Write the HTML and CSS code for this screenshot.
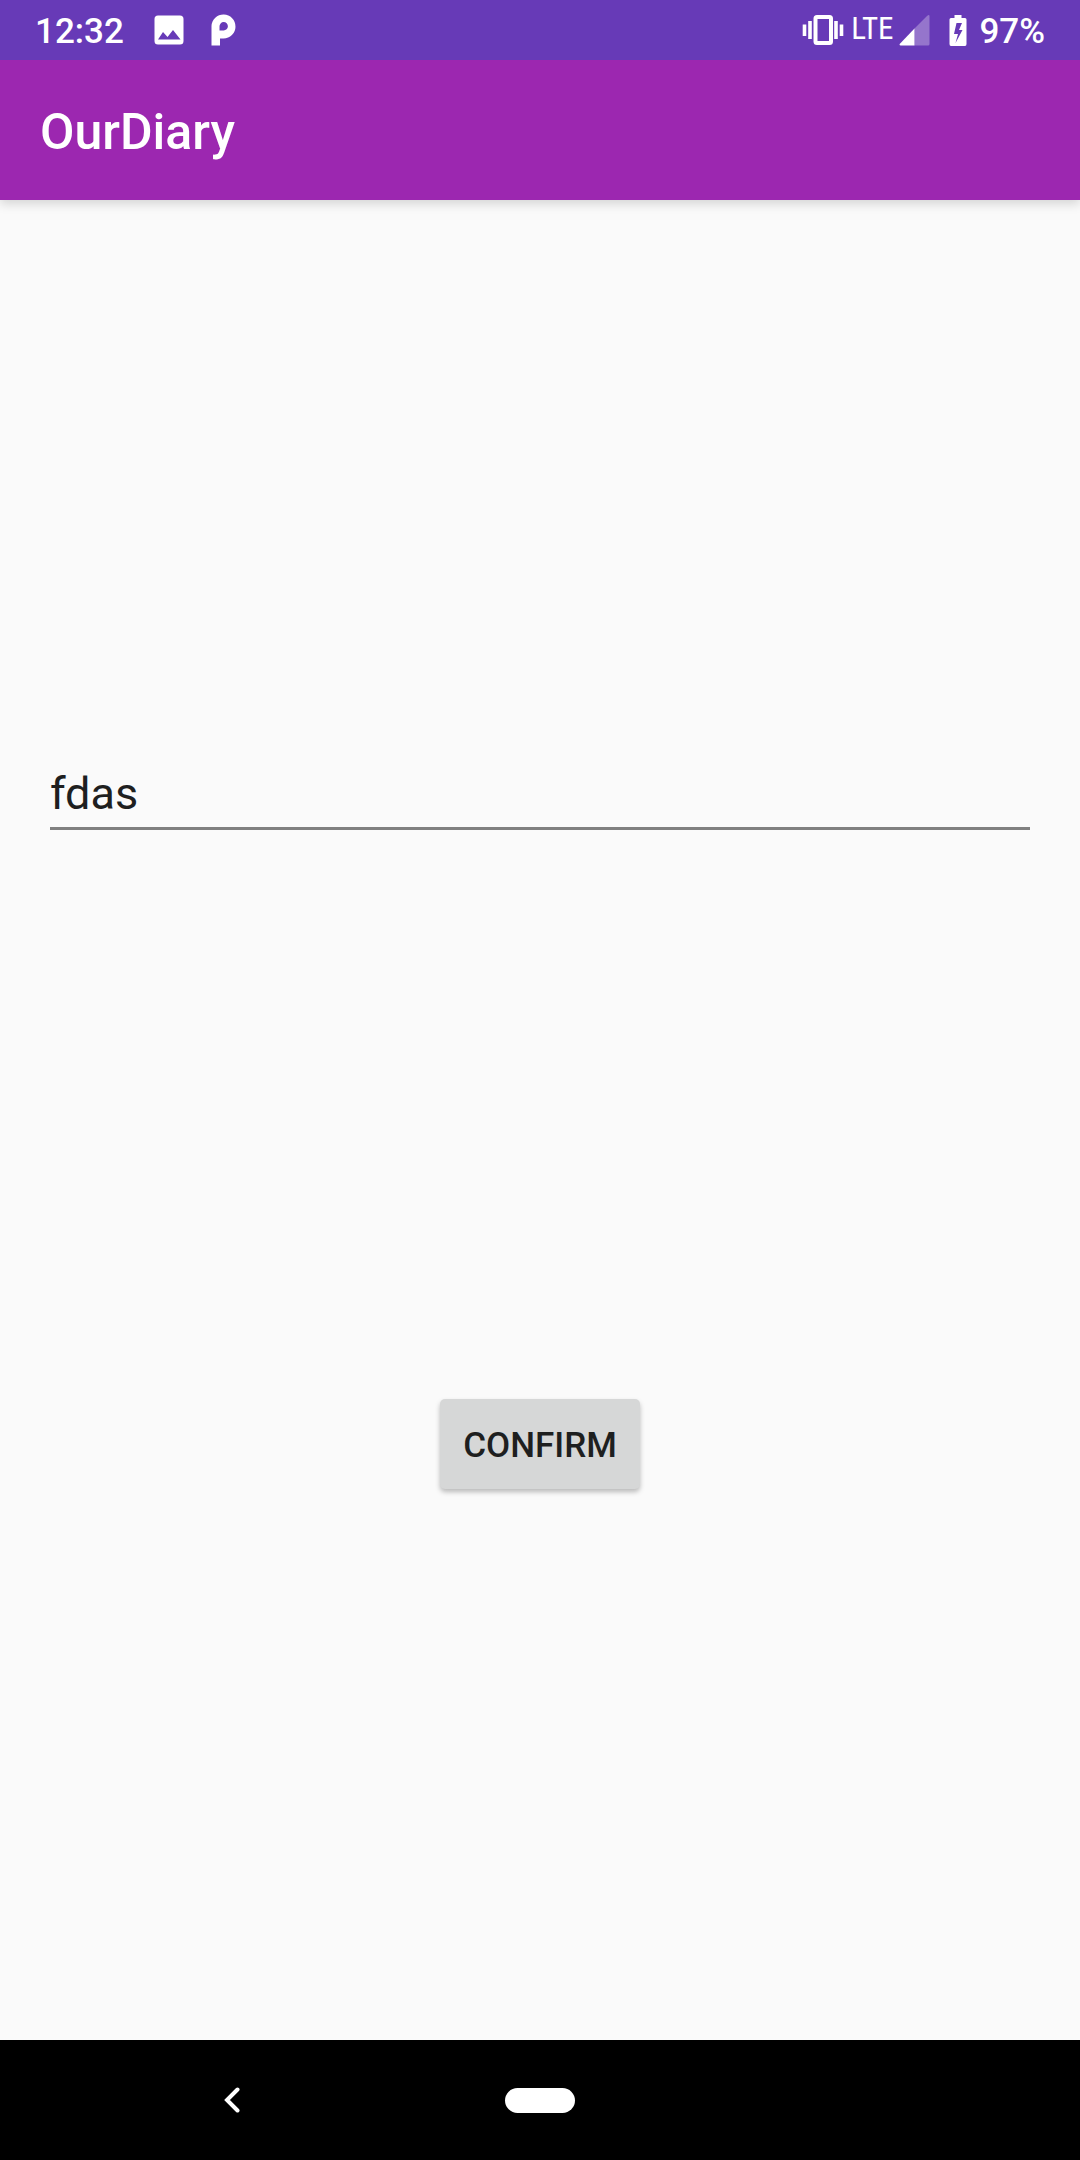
FILE: index.html
```html
<!DOCTYPE html>
<html lang="en">
<head>
<meta charset="utf-8">
<meta name="viewport" content="width=device-width, initial-scale=1">
<title>OurDiary</title>
<link rel="stylesheet" href="styles.css">
</head>
<body>
<div class="status">
  <div class="status-group">
    <span class="status-text clock">12:32</span>
    <svg class="photo" width="30" height="30" viewBox="0 0 30 30" aria-hidden="true"><path fill="#fff" fill-rule="evenodd" d="M4 .5h22a3.500 3.500 0 0 1 3.500 3.500v22a3.500 3.500 0 0 1-3.500 3.500H4A3.500 3.500 0 0 1 .5 26V4A3.500 3.500 0 0 1 4 .5zM4 24.500h22.500l-7.500-9.500-5.500 7-4.500-5z"/></svg>
    <svg width="26" height="32" viewBox="0 0 26 32" aria-hidden="true"><path fill="#fff" fill-rule="evenodd" d="M.5 31.500V12A12 12 0 1 1 12.500 24.500H9v7zM8.500 16.500h4a4.200 4.200 0 1 0-4-4z"/></svg>
  </div>
  <div class="status-group">
    <svg width="42" height="30" viewBox="0 0 42 30" aria-hidden="true"><g fill="#fff"><path d="M.7 9.500h3.600v11.500H.7zM6.200 6h3.600v18H6.200zM32.200 6h3.600v18h-3.600zM37.700 9.500h3.600v11.500h-3.600z"/></g><rect x="13.500" y="2" width="15.500" height="26" rx="1.500" fill="none" stroke="#fff" stroke-width="4"/></svg>
    <span class="network">LTE</span>
    <svg class="signal" width="31" height="31" viewBox="0 0 31 31" aria-hidden="true"><path fill="#fff" fill-opacity=".3" d="M15.500 13.500 28 1q2.500-2 2.500 0.500V29q0 1.500-1.500 1.500H15.500z"/><path fill="#fff" d="M15.500 13.500v17H1.500q-1.500-.5-.8-1.500z"/></svg>
    <svg class="battery" width="18" height="31" viewBox="0 0 18 31" aria-hidden="true"><path fill="#fff" fill-rule="evenodd" d="M5.500 0h7v3H16q1.500 0 1.500 1.500V29q0 2-1.500 2H2q-1.500 0-1.500-2V4.500Q.5 3 2 3h3.500zM7.500 8 5 19h4L6.500 28 13.500 15H10l3-7z"/></svg>
    <span class="status-text">97%</span>
  </div>
</div>
<header class="appbar"><h1 class="title">OurDiary</h1></header>
<main class="content">
  <input class="field" type="text" value="fdas" aria-label="Diary name">
  <button class="confirm" type="button">CONFIRM</button>
</main>
<nav class="navbar" aria-label="System navigation">
  <button class="nav-button back" type="button" aria-label="Back"><svg width="16" height="26" viewBox="0 0 16 26" aria-hidden="true"><path d="M13.500 2.500 3 13l10.500 10.500" fill="none" stroke="#fff" stroke-width="4" stroke-linecap="round"/></svg></button>
  <button class="nav-button" type="button" aria-label="Home"><span class="pill"></span></button>
</nav>
</body>
</html>
```
FILE: styles.css
```css
* { box-sizing: border-box; }
body {
  margin: 0;
  min-height: 100vh;
  display: flex;
  flex-direction: column;
  background: #fafafa;
  color: #1e1f1f;
  font-family: Roboto, sans-serif;
}
.status {
  position: relative;
  z-index: 1;
  display: flex;
  justify-content: space-between;
  align-items: center;
  height: 60px;
  padding: 0 35px;
  background: #673ab7;
  color: #fff;
}
.status-group { display: flex; align-items: center; }
.status-text { font-size: 35px; font-weight: 500; line-height: 40px; padding-top: 3px; }
.photo { margin: 0 27px 0 30px; }
.network {
  margin: 0 6px 0 7px;
  padding-bottom: 2px;
  font-family: "Roboto Condensed", "Liberation Sans Narrow", Roboto, sans-serif;
  font-size: 31px;
  font-weight: 400;
  line-height: 32px;
}
.battery { margin: 0 12px 0 19px; }
.appbar {
  display: flex;
  align-items: center;
  height: 140px;
  padding: 4px 40px 0;
  background: #9c27b0;
  color: #fff;
  box-shadow: 0 4px 10px rgba(0, 0, 0, .15);
}
.title { margin: 0; font-size: 50px; font-weight: 500; line-height: 60px; }
.content {
  flex: 1;
  display: flex;
  flex-direction: column;
  align-items: center;
  justify-content: space-evenly;
  padding: 0 50px;
}
.field {
  width: 100%;
  height: 68px;
  margin: 26px 0 18px;
  padding: 0 0 2px;
  border: 0;
  border-bottom: 3px solid #808080;
  outline: 0;
  background: transparent;
  color: inherit;
  font: 400 45px/56px Roboto, sans-serif;
}
.confirm {
  min-width: 200px;
  height: 90px;
  margin: 15px 0;
  padding: 3px 20px 0;
  border: 0;
  border-radius: 5px;
  background: #d6d7d7;
  box-shadow: 0 3px 5px rgba(0, 0, 0, .26);
  color: inherit;
  font: 500 35px/40px Roboto, sans-serif;
}
.navbar {
  display: grid;
  grid-template-columns: 1fr auto 1fr;
  align-items: center;
  height: 120px;
  background: #000;
}
.nav-button { display: flex; padding: 0; border: 0; background: transparent; }
.back { justify-self: center; margin-right: 41px; }
.pill { width: 70px; height: 25px; border-radius: 13px; background: #fff; }
```
